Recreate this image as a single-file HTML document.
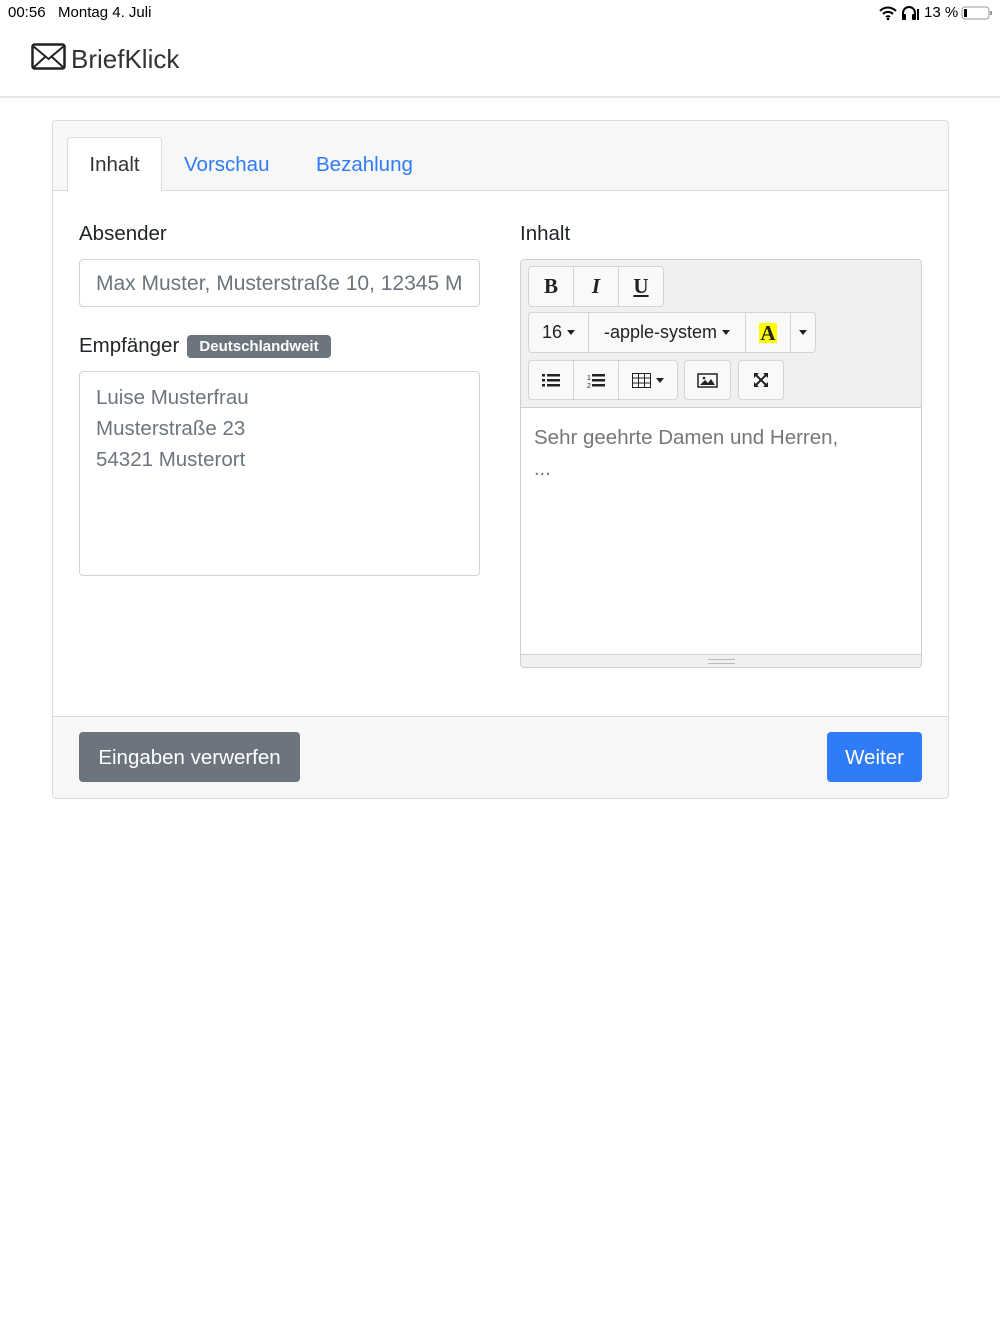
<!DOCTYPE html>
<html><head><meta charset="utf-8"><style>
*{box-sizing:border-box;margin:0;padding:0}
body{width:1000px;height:1334px;background:#fff;font-family:"Liberation Sans",sans-serif;color:#212529;position:relative;overflow:hidden}
.a{position:absolute}
.btn{position:absolute;background:#f8f9fa;border:1px solid #d5d5d5;display:flex;align-items:center;justify-content:center;font-size:18px;color:#222}
.caret{display:inline-block;width:0;height:0;border-left:4px solid transparent;border-right:4px solid transparent;border-top:5px solid #222;margin-left:5px}
</style></head><body>
<div class="a" style="left:8px;top:4px;font-size:15px;color:#000">00:56&nbsp;&nbsp;&nbsp;Montag 4. Juli</div>
<div class="a" style="left:878px;top:4px;font-size:15px;color:#000;display:flex;align-items:center;gap:3px">
<svg width="20" height="14" viewBox="0 0 20 14"><path d="M2 5a11 11 0 0 1 16 0M5 8a7 7 0 0 1 10 0M8 11a3 3 0 0 1 4 0" stroke="#000" stroke-width="2" fill="none"/><circle cx="10" cy="13" r="1.3"/></svg>
<svg width="20" height="14" viewBox="0 0 20 14"><path d="M2 12V7a6 6 0 0 1 12 0v5" stroke="#000" stroke-width="2" fill="none"/><rect x="1" y="8" width="4" height="6" rx="1"/><rect x="11" y="8" width="4" height="6" rx="1"/><rect x="16" y="3" width="2" height="11"/></svg>
<span>13 %</span>
<svg width="32" height="14" viewBox="0 0 32 14"><rect x="1" y="1" width="27" height="12" rx="3" stroke="#999" fill="none"/><rect x="3" y="3" width="3" height="8" fill="#000"/><rect x="29" y="5" width="2" height="4" fill="#999"/></svg>
</div>
<svg class="a" style="left:31px;top:43px" width="35" height="27" viewBox="0 0 35 27"><rect x="1.5" y="1.5" width="32" height="24" rx="2" fill="none" stroke="#222" stroke-width="2.5"/><path d="M2 3l15.5 13L33 3M2 25l12-11M33 25L21 14" stroke="#222" stroke-width="2" fill="none"/></svg>
<div class="a" style="left:71px;top:44px;font-size:26px;color:#333">BriefKlick</div>
<div class="a" style="left:0;top:96px;width:1000px;height:2px;background:#e6e6e6"></div>

<div class="a" style="left:52px;top:120px;width:897px;height:679px;border:1px solid #dcdcdc;border-radius:4px;background:#fff;overflow:hidden">
<div class="a" style="left:0;top:0;width:897px;height:70px;background:#f7f7f7;border-bottom:1px solid #dcdcdc"></div>
<div class="a" style="left:14px;top:16px;width:95px;height:55px;background:#fff;border:1px solid #dcdcdc;border-bottom:none;border-radius:4px 4px 0 0;font-size:20.5px;color:#333;text-align:center;line-height:54px">Inhalt</div>
<div class="a" style="left:131px;top:32px;font-size:20.5px;color:#2f7cf6">Vorschau</div>
<div class="a" style="left:263px;top:32px;font-size:20.5px;color:#2f7cf6">Bezahlung</div>
<div class="a" style="left:0;top:595px;width:897px;height:84px;background:#f7f7f7;border-top:1px solid #dcdcdc"></div>
</div>

<div class="a" style="left:79px;top:222px;font-size:20.5px">Absender</div>
<div class="a" style="left:79px;top:259px;width:401px;height:48px;border:1px solid #ced4da;border-radius:4px;font-size:21px;color:#6c757d;padding:12px 0 0 16px;white-space:nowrap;overflow:hidden">Max Muster, Musterstraße 10, 12345 M</div>
<div class="a" style="left:79px;top:334px;font-size:20.5px">Empfänger</div>
<div class="a" style="left:187px;top:335px;width:144px;height:23px;background:#6c757d;border-radius:4px;color:#fff;font-size:15px;font-weight:bold;text-align:center;line-height:23px">Deutschlandweit</div>
<div class="a" style="left:79px;top:371px;width:401px;height:205px;border:1px solid #ced4da;border-radius:4px;font-size:20.5px;color:#6c757d;padding:10px 0 0 16px;line-height:31px">Luise Musterfrau<br>Musterstraße 23<br>54321 Musterort</div>

<div class="a" style="left:520px;top:222px;font-size:20.5px">Inhalt</div>
<div class="a" style="left:520px;top:259px;width:402px;height:409px;border:1px solid #cfcfcf;border-radius:4px;overflow:hidden;background:#fff">
<div class="a" style="left:0;top:0;width:402px;height:148px;background:#f0f0f0;border-bottom:1px solid #d0d0d0"></div>
<div class="a" style="left:0;top:394px;width:402px;height:15px;background:#f0f0f0;border-top:1px solid #d0d0d0"></div>
<div class="a" style="left:187px;top:399px;width:27px;height:5px;border-top:1px solid #bbb;border-bottom:1px solid #bbb"></div>
<div class="a" style="left:13px;top:166px;font-size:20.5px;color:#777">Sehr geehrte Damen und Herren,</div>
<div class="a" style="left:13px;top:198px;font-size:20px;color:#777">...</div>
</div>
<div class="btn" style="left:528px;top:266px;width:46px;height:41px;border-radius:4px 0 0 4px;font-family:'Liberation Serif';font-weight:bold;font-size:21px">B</div>
<div class="btn" style="left:573px;top:266px;width:46px;height:41px;font-family:'Liberation Serif';font-style:italic;font-weight:bold;font-size:21px">I</div>
<div class="btn" style="left:618px;top:266px;width:46px;height:41px;border-radius:0 4px 4px 0;font-family:'Liberation Serif';font-weight:bold;font-size:21px;text-decoration:underline">U</div>
<div class="btn" style="left:528px;top:312px;width:61px;height:41px;border-radius:4px 0 0 4px">16<span class="caret"></span></div>
<div class="btn" style="left:588px;top:312px;width:158px;height:41px">-apple-system<span class="caret"></span></div>
<div class="btn" style="left:745px;top:312px;width:46px;height:41px"><span style="background:#ff0;font-family:'Liberation Serif';font-weight:bold;font-size:21px;line-height:20px;padding:0 1px">A</span></div>
<div class="btn" style="left:790px;top:312px;width:26px;height:41px;border-radius:0 4px 4px 0"><span class="caret" style="margin:0"></span></div>
<div class="btn" style="left:528px;top:360px;width:46px;height:40px;border-radius:4px 0 0 4px"><svg width="18" height="14"><g fill="#222"><rect x="0" y="1" width="3" height="2.5"/><rect x="5" y="1" width="13" height="2.5"/><rect x="0" y="6" width="3" height="2.5"/><rect x="5" y="6" width="13" height="2.5"/><rect x="0" y="11" width="3" height="2.5"/><rect x="5" y="11" width="13" height="2.5"/></g></svg></div>
<div class="btn" style="left:573px;top:360px;width:46px;height:40px"><svg width="18" height="15"><g fill="#222"><text x="0" y="7" font-size="7">1</text><text x="0" y="15" font-size="7">2</text><rect x="5" y="1" width="13" height="2.5"/><rect x="5" y="6" width="13" height="2.5"/><rect x="5" y="11" width="13" height="2.5"/></g></svg></div>
<div class="btn" style="left:618px;top:360px;width:60px;height:40px;border-radius:0 4px 4px 0"><svg width="19" height="15"><path d="M.5.5h18v14H.5zM.5 5h18M.5 10h18M6.5.5v14M12.5.5v14" stroke="#222" fill="none"/></svg><span class="caret"></span></div>
<div class="btn" style="left:684px;top:360px;width:47px;height:40px;border-radius:4px"><svg width="21" height="15"><rect x="1" y="1" width="19" height="13" stroke="#222" stroke-width="1.5" fill="none"/><path d="M3 12l5-5 3 3 3-4 4 6z" fill="#222"/><circle cx="7" cy="5" r="1.3" fill="#222"/></svg></div>
<div class="btn" style="left:738px;top:360px;width:46px;height:40px;border-radius:4px"><svg width="16" height="16"><path d="M3 3l10 10M13 3L3 13" stroke="#222" stroke-width="2"/><path d="M1 1h5L1 6zM15 1h-5l5 5zM1 15h5l-5-5zM15 15h-5l5-5z" fill="#222"/></svg></div>

<div class="a" style="left:79px;top:732px;width:221px;height:50px;background:#6c757d;border-radius:4px;color:#fff;font-size:20.5px;text-align:center;line-height:52px">Eingaben verwerfen</div>
<div class="a" style="left:827px;top:732px;width:95px;height:50px;background:#2f7cf6;border-radius:4px;color:#fff;font-size:20.5px;text-align:center;line-height:52px">Weiter</div>
</body></html>
